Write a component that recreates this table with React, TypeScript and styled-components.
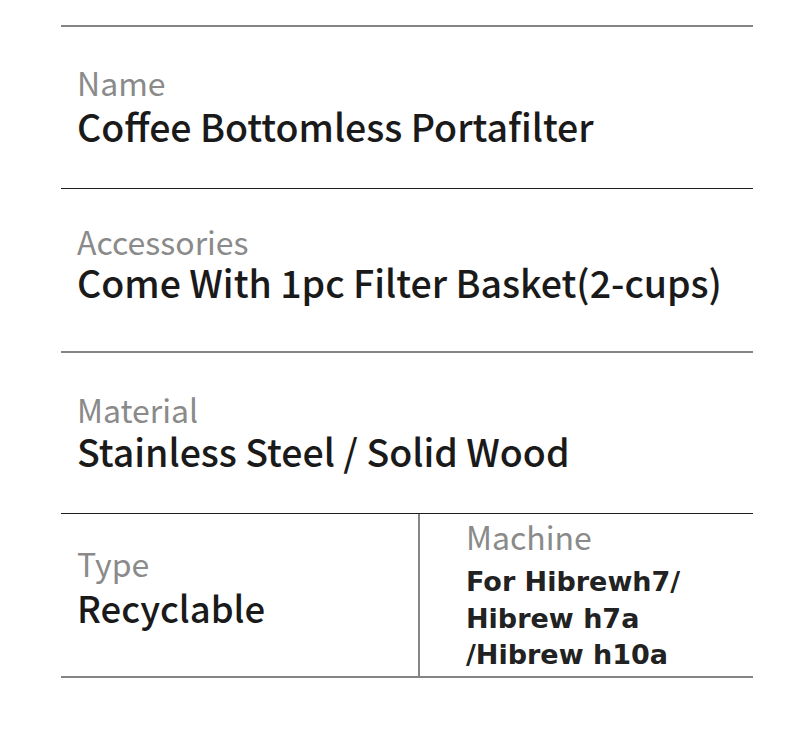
import React from "react";
import styled, { createGlobalStyle } from "styled-components";

const Global = createGlobalStyle`
  html, body { margin: 0; padding: 0; background: #ffffff; }
  body { font-family: "Noto Sans CJK SC", "Noto Sans", sans-serif; }
`;

const Page = styled.div`
  width: 800px;
  height: 741px;
  padding: 25px 0 0 61px;
  box-sizing: border-box;
  background: #ffffff;
`;

const Table = styled.div`
  width: 692px;
  display: flex;
  flex-direction: column;
  border-bottom: 2px solid #858585;
`;

const Row = styled.div<{ $line: "gray" | "dark"; $h: number }>`
  display: flex;
  height: ${(p) => p.$h}px;
  box-sizing: border-box;
  border-top: ${(p) => (p.$line === "gray" ? "2px solid #858585" : "1px solid #1e1e1e")};
`;

const Cell = styled.div<{ $pt: number; $pl: number; $w?: number; $divider?: boolean }>`
  display: flex;
  flex-direction: column;
  box-sizing: border-box;
  padding: ${(p) => p.$pt}px 0 0 ${(p) => p.$pl}px;
  ${(p) => (p.$w ? `width: ${p.$w}px; flex: none;` : "flex: 1;")}
  ${(p) => (p.$divider ? "border-right: 2px solid #858585;" : "")}
`;

const Label = styled.div`
  font-family: "Noto Sans CJK SC", "Noto Sans", sans-serif;
  font-size: 32px;
  line-height: 40px;
  font-weight: 400;
  color: #8a8a8a;
  white-space: nowrap;
`;

const Value = styled.div<{ $size: number; $gap: number }>`
  font-family: "Noto Sans CJK SC", "Noto Sans", sans-serif;
  font-size: ${(p) => p.$size}px;
  font-weight: 500;
  line-height: 46px;
  margin-top: ${(p) => p.$gap}px;
  color: #1a1a1a;
  white-space: nowrap;
`;

const BoldLines = styled.div`
  font-family: "DejaVu Sans", "Liberation Sans", sans-serif;
  font-weight: 700;
  font-size: 27px;
  line-height: 36.5px;
  margin-top: 8px;
  color: #222222;
  white-space: nowrap;
`;

export default function App() {
  return (
    <>
      <Global />
      <Page>
        <Table>
          <Row $line="gray" $h={163}>
            <Cell $pt={35} $pl={16}>
              <Label>Name</Label>
              <Value $size={37.5} $gap={1}>Coffee Bottomless Portafilter</Value>
            </Cell>
          </Row>
          <Row $line="dark" $h={163}>
            <Cell $pt={32} $pl={16}>
              <Label>Accessories</Label>
              <Value $size={37.5} $gap={-2}>Come With 1pc Filter Basket(2-cups)</Value>
            </Cell>
          </Row>
          <Row $line="gray" $h={162}>
            <Cell $pt={36} $pl={16}>
              <Label>Material</Label>
              <Value $size={37.5} $gap={-1}>Stainless Steel / Solid Wood</Value>
            </Cell>
          </Row>
          <Row $line="dark" $h={163}>
            <Cell $pt={29} $pl={16} $w={359} $divider>
              <Label>Type</Label>
              <Value $size={36.5} $gap={2}>Recyclable</Value>
            </Cell>
            <Cell $pt={2} $pl={46}>
              <Label>Machine</Label>
              <BoldLines>
                For Hibrewh7/
                <br />
                Hibrew h7a
                <br />
                /Hibrew h10a
              </BoldLines>
            </Cell>
          </Row>
        </Table>
      </Page>
    </>
  );
}
